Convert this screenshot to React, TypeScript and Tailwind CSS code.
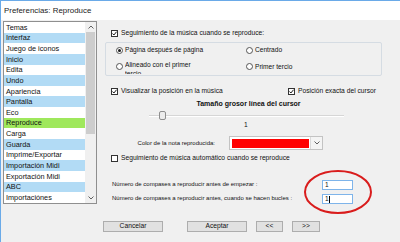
import React from "react";

const items = [
  "Temas",
  "Interfaz",
  "Juego de iconos",
  "Inicio",
  "Edita",
  "Undo",
  "Apariencia",
  "Pantalla",
  "Eco",
  "Reproduce",
  "Carga",
  "Guarda",
  "Imprime/Exportar",
  "Importación Midi",
  "Exportación Midi",
  "ABC",
  "Importaciónes",
];

function Check({ checked = false }: { checked?: boolean }) {
  return (
    <span className="flex h-[7px] w-[7px] shrink-0 items-center justify-center border border-[#333] bg-white">
      {checked && (
        <svg viewBox="0 0 5 5" className="h-[5px] w-[5px]">
          <path d="M0.5 2.5 L1.9 4 L4.6 0.7" fill="none" stroke="#1a1a1a" strokeWidth="1" />
        </svg>
      )}
    </span>
  );
}

function Radio({ on = false }: { on?: boolean }) {
  return (
    <span className="flex h-[7px] w-[7px] shrink-0 items-center justify-center rounded-full border border-[#555] bg-white">
      {on && <span className="h-[3px] w-[3px] rounded-full bg-[#1a1a1a]" />}
    </span>
  );
}

function Chevron({ up = false }: { up?: boolean }) {
  return (
    <svg viewBox="0 0 6 4" className="h-[4px] w-[6px]">
      <path
        d={up ? "M0.5 3.5 L3 1 L5.5 3.5" : "M0.5 0.5 L3 3 L5.5 0.5"}
        fill="none"
        stroke="#606060"
        strokeWidth="1"
      />
    </svg>
  );
}

function Button({ label, w }: { label: string; w: string }) {
  return (
    <div
      className={`flex h-[11px] ${w} items-center justify-center border border-[#adadad] bg-[#e1e1e1] text-[6.7px] leading-none text-[#111]`}
    >
      {label}
    </div>
  );
}

export default function App() {
  return (
    <div className="relative h-[242px] w-[400px] overflow-hidden border-l border-t border-[#6aaae8] bg-[#f0f0f0] font-['Liberation_Sans',Arial,sans-serif] text-[#111]">
      {/* barra de título */}
      <div className="flex h-[19px] items-center bg-white pl-[3px] text-[7.9px] leading-none text-[#222]">
        Preferencias: Reproduce
      </div>

      <div className="flex">
        {/* lista de secciones */}
        <div className="ml-[2px] mt-[1px] flex h-[183px] w-[94px] border border-[#8f8f8f] bg-white">
          <div className="flex w-[81px] flex-col">
            {items.map((it, i) => (
              <div
                key={it}
                className={`flex h-[10.68px] items-center pl-[2px] text-[7.3px] leading-none ${
                  it === "Reproduce" ? "bg-[#9fe85c]" : i % 2 === 1 ? "bg-[#b2dbf5]" : "bg-white"
                }`}
              >
                {it}
              </div>
            ))}
          </div>
          <div className="flex w-[11px] flex-col bg-[#f0f0f0]">
            <div className="flex h-[10px] items-center justify-center">
              <Chevron up />
            </div>
            <div className="mx-[1px] h-[102px] bg-[#cdcdcd]" />
            <div className="flex-1" />
            <div className="flex h-[10px] items-center justify-center">
              <Chevron />
            </div>
          </div>
        </div>

        {/* panel derecho */}
        <div className="flex flex-1 flex-col">
          <div className="mt-[10px] flex h-[7px] items-center gap-[3px] pl-[14px] text-[6.7px] leading-none">
            <Check checked />
            <span>Seguimiento de la música cuando se reproduce:</span>
          </div>

          <div className="ml-[8px] mt-[5px] h-[34px] w-[277px] rounded-[2px] border border-[#d5dce3] text-[6.6px] leading-none">
            <div className="mt-[4px] grid h-[7px] grid-cols-[130px_1fr] pl-[10px]">
              <div className="flex items-center gap-[2px]">
                <Radio on />
                <span>Página después de página</span>
              </div>
              <div className="flex items-center gap-[2px]">
                <Radio />
                <span>Centrado</span>
              </div>
            </div>
            <div className="mt-[6px] grid h-[14px] grid-cols-[130px_1fr] pl-[10px]">
              <div className="flex items-start gap-[2px]">
                <span className="mt-[3px]">
                  <Radio />
                </span>
                <span className="h-[14px] w-[72px] overflow-hidden leading-[9px]">
                  Alineado con el primer tercio
                </span>
              </div>
              <div className="flex items-start gap-[2px]">
                <span className="mt-[3px]">
                  <Radio />
                </span>
                <span className="leading-[13px]">Primer tercio</span>
              </div>
            </div>
          </div>

          <div className="mt-[12px] flex h-[7px] items-center pl-[14px] text-[6.7px] leading-none">
            <div className="flex w-[177px] items-center gap-[3px]">
              <Check checked />
              <span>Visualizar la posición en la música</span>
            </div>
            <div className="flex items-center gap-[3px]">
              <Check checked />
              <span>Posición exacta del cursor</span>
            </div>
          </div>

          <div className="mt-[3px] flex h-[10px] items-center justify-center text-[7px] font-bold leading-none">
            Tamaño grosor línea del cursor
          </div>

          <div className="mt-[3px] flex h-[9px] items-center">
            <div className="relative ml-[52px] h-[2px] w-[195px] border-b border-white bg-[#d6d6d6]">
              <div className="absolute left-[10px] top-[-4px] h-[9px] w-[7px] rounded-[2px] border border-[#8e8e8e] bg-[#ececec]" />
            </div>
          </div>

          <div className="mt-[1px] flex h-[9px] items-center pl-[147px] text-[6.7px] leading-none">
            1
          </div>

          <div className="mt-[6px] flex h-[14px] items-center">
            <div className="w-[118px] text-right text-[6px] leading-none">Color de la nota reproducida:</div>
            <div className="ml-[14px] flex h-[14px] w-[94px] border border-[#c3c3c3] bg-white">
              <div className="m-[1.5px] flex-1 bg-[#ff0000]" />
              <div className="flex w-[12px] items-center justify-center border-l border-[#dadada] bg-[#f4f4f4]">
                <Chevron />
              </div>
            </div>
          </div>

          <div className="mt-[5px] flex h-[7px] items-center gap-[3px] pl-[14px] text-[6.7px] leading-none">
            <Check />
            <span>Seguimiento de música automático cuando se reproduce</span>
          </div>

          <div className="mt-[18px] flex h-[10px] items-center pl-[15px] text-[6px] leading-none">
            <span className="mb-[2px] w-[210px]">Número de compases a reproducir antes de empezar :</span>
            <div className="flex h-[10px] w-[31px] items-center border border-[#7eb4ea] bg-white pl-[2px] text-[6.5px]">
              1
            </div>
          </div>

          <div className="mt-[4px] flex h-[10px] items-center pl-[15px] text-[6px] leading-none">
            <span className="mb-[2px] w-[210px]">Número de compases a reproducir antes, cuando se hacen bucles :</span>
            <div className="flex h-[10px] w-[31px] items-center border border-[#7eb4ea] bg-white pl-[2px] text-[6.5px]">
              1<span className="ml-[0.5px] h-[7px] w-[1px] bg-black" />
            </div>
          </div>

          <div className="mt-[17px] flex h-[11px] items-center pl-[6px]">
            <Button label="Cancelar" w="w-[60px]" />
            <div className="ml-[24px]">
              <Button label="Aceptar" w="w-[60px]" />
            </div>
            <div className="ml-[9px]">
              <Button label="<<" w="w-[27px]" />
            </div>
            <div className="ml-[9px]">
              <Button label=">>" w="w-[28px]" />
            </div>
          </div>
        </div>
      </div>

      {/* anotación roja */}
      <svg className="absolute left-[302px] top-[168px] h-[46px] w-[70px]" viewBox="0 0 70 46">
        <ellipse cx="35" cy="23" rx="33" ry="21" fill="none" stroke="#d91c1c" strokeWidth="2" />
      </svg>
    </div>
  );
}
